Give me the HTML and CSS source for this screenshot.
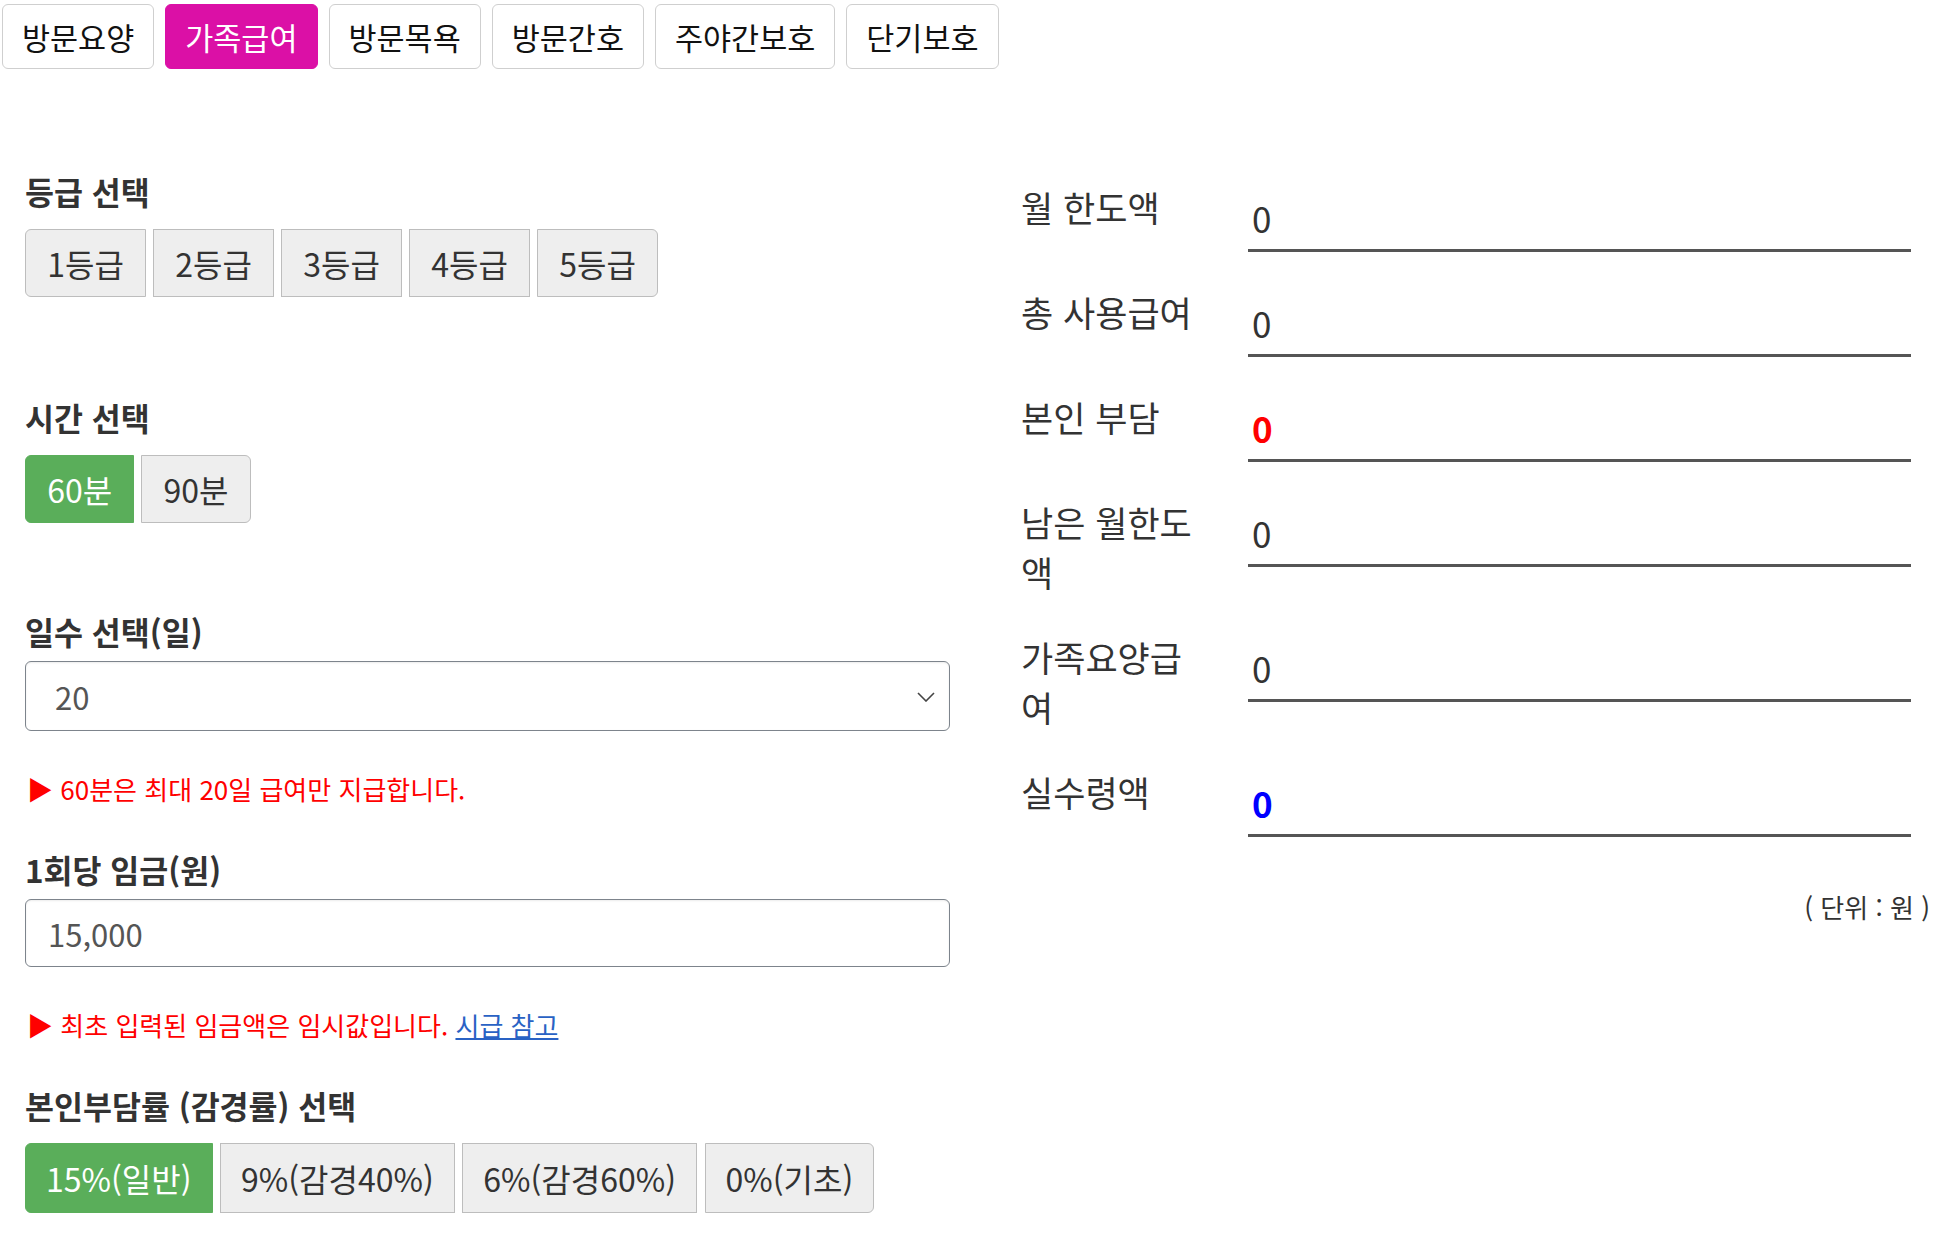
FILE: index.html
```html
<!DOCTYPE html>
<html lang="ko">
<head>
<meta charset="utf-8">
<title>가족급여 계산기</title>
<link rel="stylesheet" href="styles.css">
</head>
<body>
<nav class="tabs">
  <a class="tab">방문요양</a>
  <a class="tab tab-active">가족급여</a>
  <a class="tab">방문목욕</a>
  <a class="tab">방문간호</a>
  <a class="tab">주야간보호</a>
  <a class="tab">단기보호</a>
</nav>
<main class="layout">
  <section class="form-col">
    <h3 class="heading heading-first">등급 선택</h3>
    <div class="btn-group">
      <button class="btn">1등급</button>
      <button class="btn">2등급</button>
      <button class="btn">3등급</button>
      <button class="btn">4등급</button>
      <button class="btn">5등급</button>
    </div>

    <h3 class="heading heading-after-btns">시간 선택</h3>
    <div class="btn-group">
      <button class="btn btn-on">60분</button>
      <button class="btn">90분</button>
    </div>

    <h3 class="heading heading-after-btns2">일수 선택(일)</h3>
    <div class="select-wrap">
      <select class="field field-select">
        <option>20</option>
      </select>
      <svg class="chevron" width="18" height="10" viewBox="0 0 18 10"><polyline points="1,1 9,9 17,1" fill="none" stroke="#444" stroke-width="1.6"/></svg>
    </div>
    <p class="note">▶ 60분은 최대 20일 급여만 지급합니다.</p>

    <h3 class="heading heading-after-note">1회당 임금(원)</h3>
    <input class="field field-input" type="text" value="15,000">
    <p class="note">▶ 최초 입력된 임금액은 임시값입니다. <a class="note-link">시급 참고</a></p>

    <h3 class="heading heading-after-note">본인부담률 (감경률) 선택</h3>
    <div class="btn-group btn-group-rate">
      <button class="btn btn-on">15%(일반)</button>
      <button class="btn">9%(감경40%)</button>
      <button class="btn">6%(감경60%)</button>
      <button class="btn">0%(기초)</button>
    </div>
  </section>

  <section class="result-col">
    <div class="result-row">
      <div class="result-label">월 한도액</div>
      <div class="result-value">0</div>
    </div>
    <div class="result-row">
      <div class="result-label">총 사용급여</div>
      <div class="result-value">0</div>
    </div>
    <div class="result-row">
      <div class="result-label">본인 부담</div>
      <div class="result-value value-red">0</div>
    </div>
    <div class="result-row">
      <div class="result-label">남은 월한도액</div>
      <div class="result-value">0</div>
    </div>
    <div class="result-row">
      <div class="result-label">가족요양급여</div>
      <div class="result-value">0</div>
    </div>
    <div class="result-row">
      <div class="result-label">실수령액</div>
      <div class="result-value value-blue">0</div>
    </div>
    <p class="unit">( 단위 : 원 )</p>
  </section>
</main>
</body>
</html>
```

FILE: styles.css
```css
* { box-sizing: border-box; }

body {
  margin: 0;
  font-family: "Noto Sans CJK KR", "Noto Sans", sans-serif;
  color: #333;
  background: #fff;
}

.tabs {
  display: flex;
  gap: 11px;
  padding: 4px 0 0 2px;
}

.tab {
  display: flex;
  align-items: center;
  justify-content: center;
  height: 65px;
  padding: 0 19px;
  border: 1px solid #cfcfcf;
  border-radius: 6px;
  background: #fff;
  color: #111;
  font-size: 30.5px;
  cursor: pointer;
}

.tab-active {
  background: #db10a6;
  border-color: #db10a6;
  color: #fff;
}

.layout {
  display: grid;
  grid-template-columns: 925px 1fr;
  column-gap: 71px;
  padding: 0 15px 0 25px;
}

.form-col {
  display: flex;
  flex-direction: column;
  align-items: flex-start;
}

.heading {
  margin: 0;
  font-size: 31.5px;
  line-height: 40px;
  font-weight: 700;
  color: #333;
}

.heading-first { margin-top: 102px; }
.heading-after-btns { margin-top: 100px; }
.heading-after-btns2 { margin-top: 88px; }
.heading-after-note { margin-top: 42px; }

.btn-group {
  display: flex;
  gap: 7px;
  margin-top: 18px;
}

.btn-group-rate { gap: 7.5px; }

.btn {
  height: 68px;
  padding: 0 21.2px;
  border: 1px solid #bdbdbd;
  border-radius: 0;
  background: #eee;
  color: #333;
  font-family: inherit;
  font-size: 32px;
  cursor: pointer;
}

.btn-group-rate .btn {
  height: 70px;
  padding: 0 20px;
}

.btn:first-child { border-radius: 6px 0 0 6px; }
.btn:last-child { border-radius: 0 6px 6px 0; }

.btn-on {
  background: #5aae5a;
  border-color: #5aae5a;
  color: #fff;
}

.select-wrap {
  position: relative;
  width: 925px;
  margin-top: 10px;
}

.field {
  display: block;
  width: 925px;
  border: 1px solid #7d848c;
  border-radius: 6px;
  background: #fff;
  color: #555;
  font-family: inherit;
  font-size: 31px;
  box-shadow: inset 0 1px 2px rgba(0,0,0,0.08);
}

.field-select {
  height: 70px;
  padding: 0 0 0 29px;
  appearance: none;
  -webkit-appearance: none;
}

.chevron {
  position: absolute;
  right: 15px;
  top: 31px;
}

.field-input {
  height: 68px;
  margin-top: 10px;
  padding: 0 0 0 22px;
}

.note {
  margin: 40px 0 0 2px;
  font-size: 26px;
  line-height: 36px;
  color: #ff0000;
}

.note-link {
  color: #2962c4;
  text-decoration: underline;
  cursor: pointer;
}

.result-col {
  display: flex;
  flex-direction: column;
  padding-top: 113px;
}

.result-row {
  display: flex;
  align-items: flex-start;
  margin: 0 19px 35px 0;
}

.result-label {
  flex: 0 0 227px;
  padding-right: 47px;
  font-size: 35px;
  line-height: 50px;
  color: #333;
}

.result-value {
  flex: 1;
  height: 70px;
  padding: 12px 0 0 4px;
  border-bottom: 3px solid #555;
  font-size: 35px;
  line-height: 48px;
  color: #333;
}

.value-red { color: #ff0000; font-weight: 700; }
.value-blue { color: #0000ff; font-weight: 700; }

.unit {
  margin: 18px 0 0;
  text-align: right;
  font-size: 26px;
  line-height: 34px;
  color: #333;
}
```
